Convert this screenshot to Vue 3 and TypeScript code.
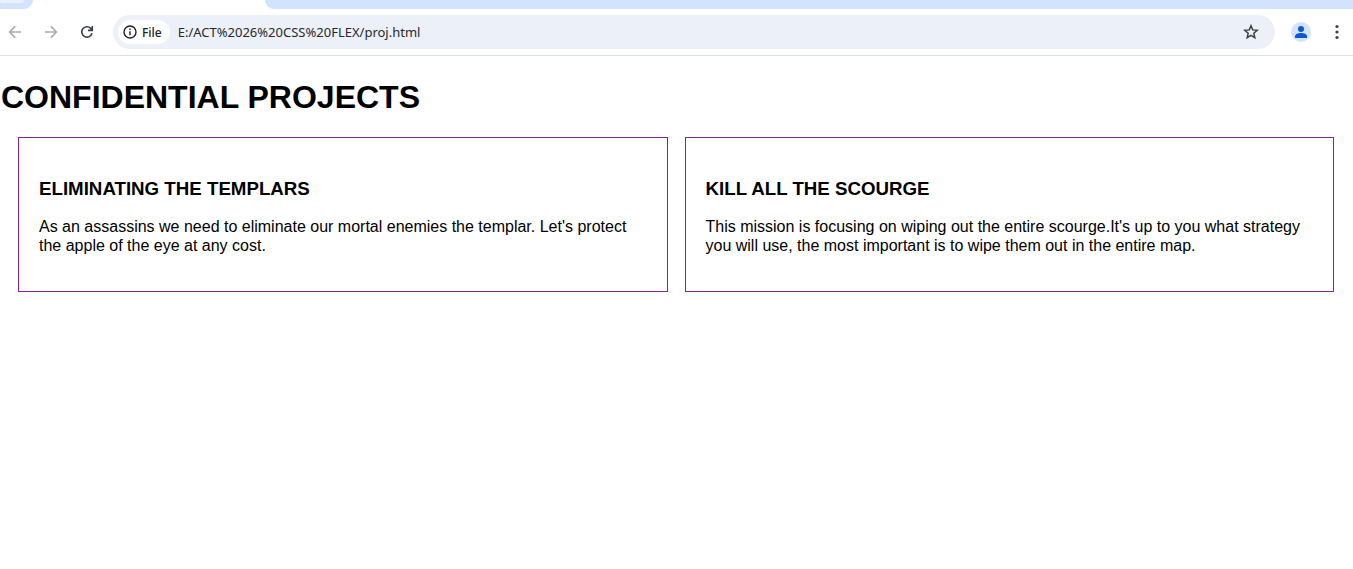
<script setup lang="ts">
import { ref } from 'vue'

interface Project {
  title: string
  text: string
}

const address = ref<string>('E:/ACT%2026%20CSS%20FLEX/proj.html')

const projects: Project[] = [
  {
    title: 'ELIMINATING THE TEMPLARS',
    text: "As an assassins we need to eliminate our mortal enemies the templar. Let's protect the apple of the eye at any cost.",
  },
  {
    title: 'KILL ALL THE SCOURGE',
    text: "This mission is focusing on wiping out the entire scourge.It's up to you what strategy you will use, the most important is to wipe them out in the entire map.",
  },
]
</script>

<template>
  <div class="window">
    <header class="chrome">
      <div class="tabs">
        <div class="strip-start"><span class="tab-search"></span></div>
        <div class="active-tab"></div>
        <div class="strip-rest"></div>
      </div>
      <div class="toolbar">
        <nav class="nav">
          <button class="icon-btn faded" type="button" aria-label="Back">
            <svg width="16" height="16" viewBox="0 0 16 16" fill="none" stroke="currentColor" stroke-width="1.6">
              <path d="M14 8H3M8.2 2.4 2.6 8l5.6 5.6" />
            </svg>
          </button>
          <button class="icon-btn faded" type="button" aria-label="Forward">
            <svg width="16" height="16" viewBox="0 0 16 16" fill="none" stroke="currentColor" stroke-width="1.6">
              <path d="M2 8h11M7.8 2.4 13.4 8l-5.600 5.600" />
            </svg>
          </button>
          <button class="icon-btn" type="button" aria-label="Reload">
            <svg width="16" height="16" viewBox="0 0 16 16" fill="none" stroke="currentColor" stroke-width="1.6">
              <path d="M13 9.200A5.200 5.200 0 1 1 11.800 4.400L13.300 6M13.300 2v4.400H9" />
            </svg>
          </button>
        </nav>
        <div class="omnibox">
          <button class="chip" type="button">
            <svg width="14" height="14" viewBox="0 0 14 14" fill="none" stroke="currentColor" stroke-width="1.4">
              <circle cx="7" cy="7" r="6" />
              <path d="M7 6.200v4.100M7 3.600V5" />
            </svg>
            <span>File</span>
          </button>
          <input v-model="address" class="url" type="text" aria-label="Address" spellcheck="false" />
          <button class="icon-btn star" type="button" aria-label="Bookmark this page">
            <svg width="18" height="18" viewBox="0 0 18 18" fill="none" stroke="currentColor" stroke-width="1.5">
              <path d="m9 2.800 1.700 4.100 4.500.4-3.400 2.900 1 4.400L9 12.300l-3.800 2.300 1-4.400-3.400-2.900 4.500-.4z" />
            </svg>
          </button>
        </div>
        <button class="avatar" type="button" aria-label="Profile">
          <svg width="20" height="20" viewBox="0 0 20 20" fill="currentColor">
            <circle cx="10" cy="7" r="3" />
            <path d="M4 16v-1.600C4 12.200 7.200 11 10 11s6 1.200 6 3.400V16z" />
          </svg>
        </button>
        <button class="icon-btn" type="button" aria-label="Menu">
          <svg width="16" height="16" viewBox="0 0 16 16" fill="currentColor">
            <circle cx="8" cy="2.500" r="1.600" />
            <circle cx="8" cy="8" r="1.600" />
            <circle cx="8" cy="13.500" r="1.600" />
          </svg>
        </button>
      </div>
    </header>

    <main class="page">
      <h1>CONFIDENTIAL PROJECTS</h1>
      <div class="projects">
        <article v-for="project in projects" :key="project.title" class="card">
          <h3>{{ project.title }}</h3>
          <p>{{ project.text }}</p>
        </article>
      </div>
    </main>
  </div>
</template>

<style>
body {
  margin: 0;
  background: #fff;
}
</style>

<style scoped>
.window {
  font-family: 'Liberation Sans', Arial, sans-serif;
  color: #000;
}

button,
input {
  border: 0;
  padding: 0;
  background: none;
  font: inherit;
  color: inherit;
}

svg {
  display: block;
}

.chrome {
  border-bottom: 1px solid #dedfe1;
  font-family: 'Noto Sans', 'Open Sans', sans-serif;
}

.tabs {
  display: flex;
  height: 9px;
}

.strip-start {
  width: 33px;
  background: #d3e3fd;
  border-bottom-right-radius: 9px;
}

.tab-search {
  display: block;
  width: 24px;
  height: 3px;
  background: #e9f1fe;
  border-radius: 0 0 12px 8px;
}

.active-tab {
  width: 232px;
}

.strip-rest {
  flex: 1;
  background: #d3e3fd;
  border-bottom-left-radius: 9px;
}

.toolbar {
  display: flex;
  align-items: center;
  height: 46px;
  padding: 0 8px 0 7px;
}

.nav {
  display: flex;
  gap: 20px;
}

.icon-btn {
  flex: none;
  color: #3c4043;
}

.faded {
  color: #a9abad;
}

.omnibox {
  display: flex;
  flex: 1;
  align-items: center;
  height: 34px;
  margin: 0 16px 0 18px;
  padding: 0 15px 0 5px;
  background: #ecf0f9;
  border-radius: 17px;
}

.chip {
  display: flex;
  align-items: center;
  gap: 5px;
  height: 24px;
  padding: 0 8px 0 5px;
  background: #fff;
  border-radius: 12px;
  color: #202124;
  font-size: 12px;
  font-weight: 500;
}

.url {
  flex: 1;
  min-width: 0;
  margin-left: 8px;
  outline: 0;
  color: #27292c;
  font-size: 13px;
  line-height: 20px;
}

.avatar {
  margin-right: 18px;
  background: #d3e3fd;
  border-radius: 50%;
  color: #0b57d0;
}

.page {
  padding: 23px 1px 0;
}

h1 {
  margin: 0;
  font-size: 32px;
  line-height: 36px;
}

.projects {
  display: flex;
  gap: 17px;
  padding: 22px 18px 0 17px;
}

.card {
  flex: 1;
  padding: 40px 20px 36px;
  border: 1px solid #84209a;
}

h3 {
  margin: 0 0 18px;
  line-height: 21px;
}

p {
  margin: 0;
  font-size: 16px;
  line-height: 19px;
}
</style>
